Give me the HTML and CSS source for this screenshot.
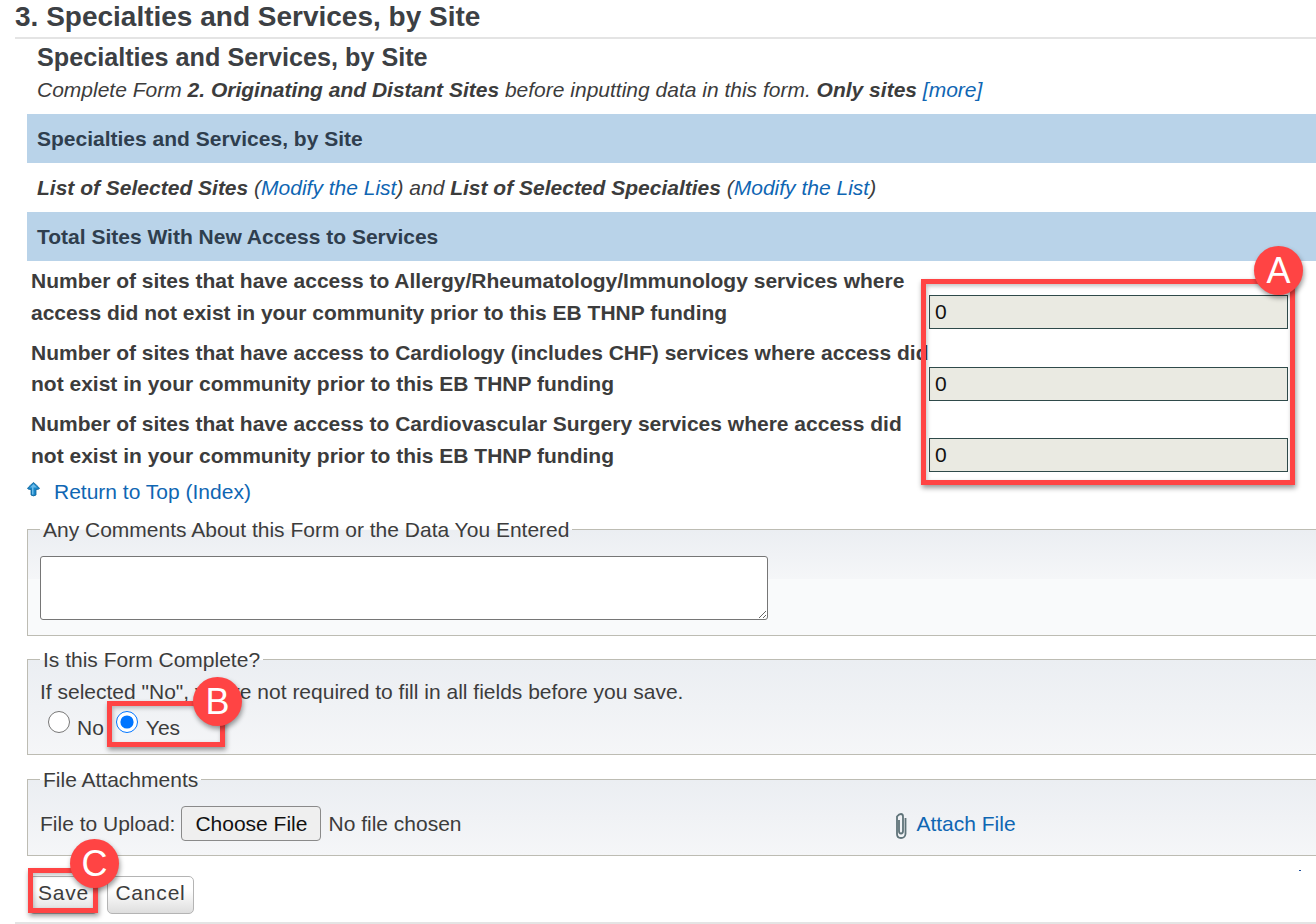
FILE: index.html
```html
<!DOCTYPE html>
<html lang="en">
<head>
<meta charset="utf-8">
<title>Specialties and Services, by Site</title>
<link rel="stylesheet" href="styles.css">
</head>
<body>
<h1 class="page-title">3. Specialties and Services, by Site</h1>
<main class="content">
  <h2 class="form-title">Specialties and Services, by Site</h2>
  <p class="intro">Complete Form <b>2. Originating and Distant Sites</b> before inputting data in this form. <b>Only sites</b> <a href="#">[more]</a></p>
  <div class="band">Specialties and Services, by Site</div>
  <p class="lists"><b>List of Selected Sites</b> (<a href="#">Modify the List</a>) and <b>List of Selected Specialties</b> (<a href="#">Modify the List</a>)</p>
  <div class="band">Total Sites With New Access to Services</div>
  <div class="rows">
    <div class="row">
      <label class="row-label">Number of sites that have access to Allergy/Rheumatology/Immunology services where access did not exist in your community prior to this EB THNP funding</label>
      <input class="num" type="text" value="0" readonly>
    </div>
    <div class="row">
      <label class="row-label">Number of sites that have access to Cardiology (includes CHF) services where access did not exist in your community prior to this EB THNP funding</label>
      <input class="num" type="text" value="0" readonly>
    </div>
    <div class="row">
      <label class="row-label">Number of sites that have access to Cardiovascular Surgery services where access did not exist in your community prior to this EB THNP funding</label>
      <input class="num" type="text" value="0" readonly>
    </div>
  </div>
  <div class="top-link">
    <svg class="up-icon" width="13" height="15" viewBox="0 0 13 15"><path d="M6.500 .5C8 2 11 4 12.500 6.500Q12 7.500 9 7.500L9 13Q6.500 14.800 4 13L4 7.500Q1 7.500 .5 6.500C2 4 5 2 6.500 .5Z" fill="#1a86c8" stroke="#0d5f96" stroke-width=".8"/><path d="M6.500 2 10 5.500 6.500 5.500 6.500 12.500 5 12.500 5 5.500 3 5.500Z" fill="#6cbcea"/></svg>
    <a href="#">Return to Top (Index)</a>
  </div>
  <fieldset class="box box-comments">
    <legend>Any Comments About this Form or the Data You Entered</legend>
    <textarea class="comments"></textarea>
  </fieldset>
  <fieldset class="box box-complete">
    <legend>Is this Form Complete?</legend>
    <p class="hint">If selected "No", you're not required to fill in all fields before you save.</p>
    <div class="radios">
      <label class="radio"><input type="radio" name="complete"><span>No</span></label>
      <label class="radio"><input type="radio" name="complete" checked><span>Yes</span></label>
    </div>
  </fieldset>
  <fieldset class="box box-files">
    <legend>File Attachments</legend>
    <div class="upload">
      <label class="upload-label">File to Upload:</label>
      <input class="file" type="file">
      <a class="attach" href="#">
        <svg class="clip" width="14" height="28" viewBox="0 0 14 28"><path d="M5 8V19Q5 21.500 7 21.500T9 19V4.500Q9 2 7 2T3 4.500V22Q3 26 7 26T11.500 22V6" fill="none" stroke="#5f7379" stroke-width="1.800"/></svg>
        Attach File
      </a>
    </div>
  </fieldset>
  <div class="actions">
    <button class="btn btn-save" type="button">Save</button>
    <button class="btn btn-cancel" type="button">Cancel</button>
  </div>
</main>
<div class="foot-line"></div>

<div class="mark mark-a"></div>
<div class="pin pin-a">A</div>
<div class="mark mark-b"></div>
<div class="pin pin-b">B</div>
<div class="mark mark-c"></div>
<div class="pin pin-c">C</div>
<span class="speck"></span>
</body>
</html>
```
FILE: styles.css
```css
* { box-sizing: border-box; }
html, body { margin: 0; padding: 0; }
body {
  position: relative;
  width: 1316px;
  height: 924px;
  overflow: hidden;
  background: #fff;
  color: #3c3c3c;
  font-family: "Liberation Sans", Arial, sans-serif;
  font-size: 21px;
}
a { color: #0f66b3; text-decoration: none; }
p { margin: 0; }

.page-title {
  margin: 0 0 0 15px;
  height: 39px;
  line-height: 34px;
  font-size: 28px;
  font-weight: bold;
  color: #3c4044;
  border-bottom: 2px solid #e4e4e4;
}
.content { padding-left: 27px; }
.form-title {
  margin: 0;
  padding-left: 10px;
  height: 35px;
  line-height: 36px;
  font-size: 25.200px;
  font-weight: bold;
  color: #3c4044;
}
.intro {
  padding-left: 10px;
  height: 40px;
  line-height: 32px;
  font-style: italic;
}
.band {
  height: 49px;
  line-height: 50px;
  padding-left: 10px;
  background: #b9d3e9;
  color: #2f3e4e;
  font-weight: bold;
}
.lists {
  height: 49px;
  line-height: 50px;
  padding-left: 10px;
  font-style: italic;
}
.rows { padding: 4px 0 0 4px; }
.row {
  display: flex;
  align-items: flex-start;
  height: 71.5px;
}
.row-label {
  width: 898px;
  flex: none;
  line-height: 31.500px;
  font-weight: bold;
}
.num {
  flex: none;
  width: 359px;
  height: 34px;
  margin-top: 30px;
  padding: 0 5px;
  border: 1px solid #2f4a4a;
  border-radius: 0;
  background: #eaeae2;
  color: #111;
  font: 21px "Liberation Sans", Arial, sans-serif;
  outline: none;
}
.top-link {
  display: flex;
  align-items: flex-start;
  height: 37px;
  line-height: 24px;
}
.up-icon { margin: 2px 14px 0 0; flex: none; }

.box {
  margin: 0 0 11px;
  padding: 0 0 0 12px;
  min-width: 0;
  border: 1px solid #bdbcb3;
  border-right: none;
  background: #f9fafb linear-gradient(#ebeef2, #f5f6f8) 0 0 / 100% 49px no-repeat;
}
.box legend {
  margin-left: 0;
  padding: 0 3px;
  line-height: 26px;
}
.comments {
  display: block;
  width: 728px;
  height: 64px;
  margin: 13px 0 15px;
  border: 1px solid #767676;
  border-radius: 3px;
  background: #fff;
  outline: none;
}
.box-complete, .box-files { background: linear-gradient(#ebeef2, #f5f6f8); }
.box-complete { height: 108px; margin-bottom: 12px; }
.box-files { height: 89px; margin-bottom: 20px; }
.hint { line-height: 26px; margin-top: 6px; }
.radios { display: flex; gap: 12px; padding-left: 8px; }
.radio { display: flex; align-items: flex-start; height: 40px; }
.radio input { width: 22px; height: 22px; margin: 6px 7px 0 0; }
.radio input:checked { margin-right: 8px; }
.radio span { margin-top: 10px; line-height: 26px; }

.upload { display: flex; align-items: center; height: 36px; margin-top: 13px; }
.upload-label { margin-right: 6px; }
.file {
  width: 713px;
  flex: none;
  font: 21px "Liberation Sans", Arial, sans-serif;
  color: #3c3c3c;
}
.file::file-selector-button {
  height: 35px;
  margin-right: 7px;
  padding: 0 13px;
  border: 1px solid #8a8a8a;
  border-radius: 4px;
  background: #efefef;
  color: #111;
  font: 21px "Liberation Sans", Arial, sans-serif;
}
.attach { display: inline-flex; align-items: center; gap: 8px; }
.clip { margin-top: 4px; }

.actions { display: flex; gap: 9px; padding-left: 2px; }
.btn {
  height: 38px;
  padding: 0 0 3px;
  border: 1px solid #b4b4b4;
  border-radius: 5px;
  background: linear-gradient(#fff 35%, #dedede);
  color: #3c3c3c;
  font: 21px "Liberation Sans", Arial, sans-serif;
  letter-spacing: .8px;
}
.btn-save { width: 69px; }
.btn-cancel { width: 87px; }
.foot-line {
  position: absolute;
  left: 15px;
  right: 0;
  top: 922px;
  height: 2px;
  background: #e4e4e4;
}

.mark {
  position: absolute;
  border: 5px solid #ff4444;
  box-shadow: 1px 3px 5px rgba(0, 0, 0, .4), inset 1px 2px 4px rgba(0, 0, 0, .25);
}
.mark-a { left: 921px; top: 279px; width: 374px; height: 206px; }
.mark-b { left: 107px; top: 701px; width: 118px; height: 46px; }
.mark-c { left: 28px; top: 868px; width: 70px; height: 45px; }
.pin {
  position: absolute;
  width: 49px;
  height: 49px;
  border-radius: 50%;
  background: #ff4444;
  color: #fff;
  font-size: 36px;
  line-height: 49px;
  text-align: center;
  box-shadow: 1px 3px 5px rgba(0, 0, 0, .4);
}
.pin-a { left: 1254px; top: 246px; }
.pin-b { left: 193px; top: 677px; }
.pin-c { left: 70px; top: 839px; }
.speck {
  position: absolute;
  left: 1299px;
  top: 870px;
  width: 2px;
  height: 1px;
  background: #1c4f9c;
}
```
